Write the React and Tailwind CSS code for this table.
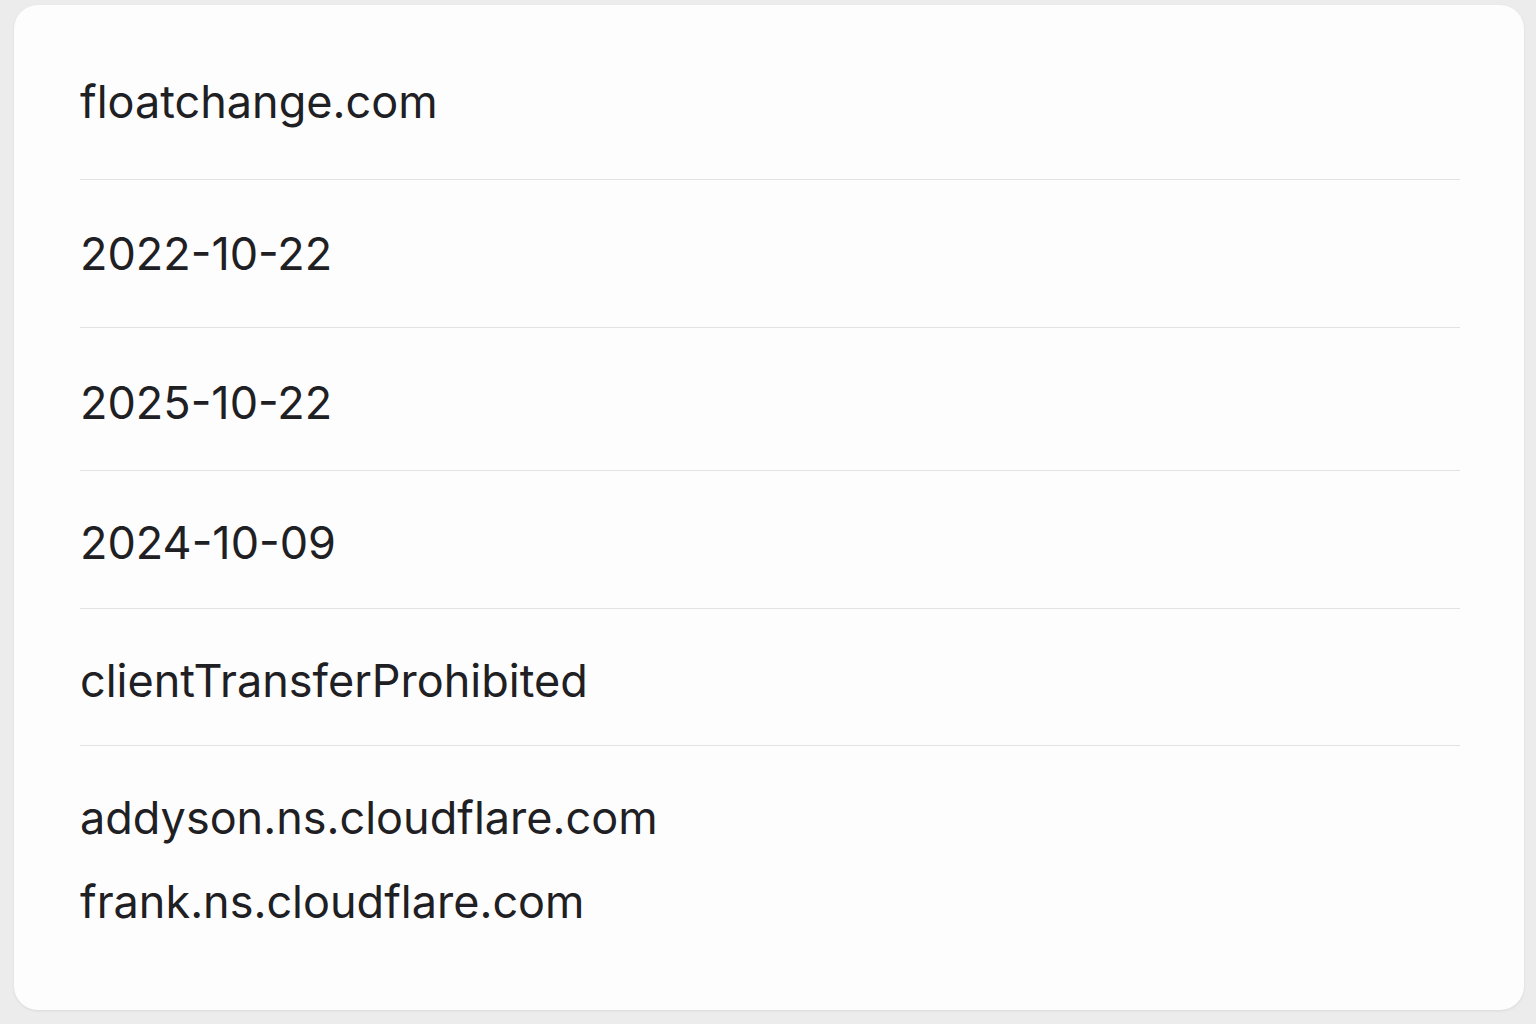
import React from "react";

const rows = [
    { text: "floatchange.com", pad: "pt-[73px] pb-[53px]" },
    { text: "2022-10-22", pad: "pt-[50px] pb-[49px]" },
    { text: "2025-10-22", pad: "pt-[51px] pb-[43px]" },
    { text: "2024-10-09", pad: "pt-[48px] pb-[41px]" },
    { text: "clientTransferProhibited", pad: "pt-[48px] pb-[40px]" },
];

const nameServers = ["addyson.ns.cloudflare.com", "frank.ns.cloudflare.com"];

const App = () => {
    return (
        <div className="min-h-screen w-full bg-[#ececec] pl-[14px] pr-[12px] pt-[5px] pb-[14px] font-['Inter','Noto_Sans',sans-serif]">
            <div className="rounded-[24px] bg-[#fdfdfd] pl-[66px] pr-[64px] shadow-[0_1px_3px_rgba(0,0,0,0.08)]">
                {rows.map((row) => (
                    <div
                        key={row.text}
                        className={`border-b border-[#e2e2e4] ${row.pad}`}
                    >
                        <p className="text-[45px] leading-[48px] text-[#1f2023]">
                            {row.text}
                        </p>
                    </div>
                ))}
                <div className="flex flex-col gap-[36px] pt-[48px] pb-[84px]">
                    {nameServers.map((ns) => (
                        <p
                            key={ns}
                            className="text-[45px] leading-[48px] text-[#1f2023]"
                        >
                            {ns}
                        </p>
                    ))}
                </div>
            </div>
        </div>
    );
};

export default App;
